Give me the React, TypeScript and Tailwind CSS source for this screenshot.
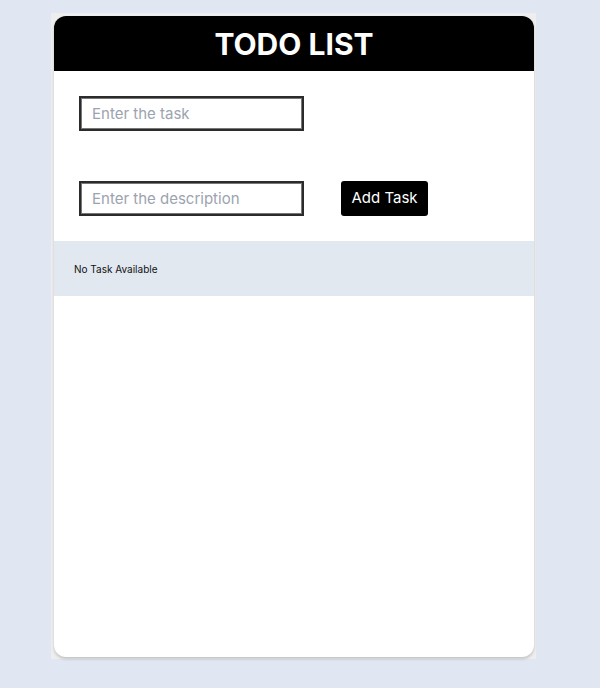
import { useState } from 'react';

interface Task {
  title: string;
  description: string;
}

export default function App() {
  const [title, setTitle] = useState('');
  const [description, setDescription] = useState('');
  const [tasks, setTasks] = useState<Task[]>([]);

  const addTask = () => {
    if (!title.trim()) return;
    setTasks([...tasks, { title, description }]);
    setTitle('');
    setDescription('');
  };

  return (
    <div className="min-h-screen bg-[#e0e7f2] pt-[13px] font-['Inter',sans-serif]">
      <div className="ml-[51px] w-[485px] bg-[#eeeeee] p-[3px] pb-[2px]">
        <div className="h-[641px] w-[480px] rounded-xl bg-white shadow-[0_2px_3px_rgba(0,0,0,0.18)] overflow-hidden flex flex-col">
          {/* Header */}
          <div className="h-[55px] bg-black flex items-center justify-center">
            <h1 className="text-[30px] font-bold text-white leading-none">TODO LIST</h1>
          </div>

          {/* Form */}
          <div className="px-[25px] pt-[25px] pb-[25px]">
            <input
              value={title}
              onChange={(e) => setTitle(e.target.value)}
              placeholder="Enter the task"
              className="block w-[225px] h-[35px] border-2 border-[#2b2b2b] shadow-[inset_0_0_0_1px_#777] px-[11px] text-[15px] text-gray-900 placeholder:text-[#9ca3af] outline-none"
            />
            <div className="flex items-center mt-[50px]">
              <input
                value={description}
                onChange={(e) => setDescription(e.target.value)}
                placeholder="Enter the description"
                className="block w-[225px] h-[35px] border-2 border-[#2b2b2b] shadow-[inset_0_0_0_1px_#777] px-[11px] text-[15px] text-gray-900 placeholder:text-[#9ca3af] outline-none"
              />
              <button
                onClick={addTask}
                className="ml-[37px] h-[35px] w-[87px] bg-black text-white text-[15px] rounded-[3px]"
              >
                Add Task
              </button>
            </div>
          </div>

          {/* Task list */}
          <div className="bg-[#e2e8f0] min-h-[55px] px-5 pt-[2px] flex flex-col justify-center">
            {tasks.length === 0 ? (
              <p className="text-[10px] text-[#111]">No Task Available</p>
            ) : (
              tasks.map((t, i) => (
                <div key={i} className="py-2">
                  <p className="text-sm font-semibold">{t.title}</p>
                  <p className="text-xs text-gray-600">{t.description}</p>
                </div>
              ))
            )}
          </div>
        </div>
      </div>
    </div>
  );
}
